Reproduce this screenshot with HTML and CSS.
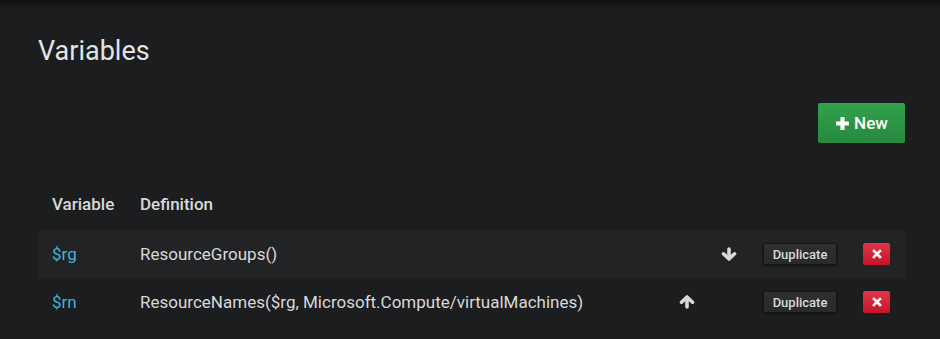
FILE: index.html
```html
<!DOCTYPE html>
<html>
<head>
<meta charset="utf-8">
<link rel="stylesheet" href="styles.css">
</head>
<body>
<div class="page">
  <h1 class="title">Variables</h1>
  <div class="toolbar">
    <button class="btn-new"><svg class="plus" viewBox="0 0 13 13" width="13" height="13"><rect x="4.4" y="0" width="4.2" height="13" rx="0.7"/><rect x="0" y="4.4" width="13" height="4.2" rx="0.7"/></svg><span>New</span></button>
  </div>
  <div class="table">
    <div class="row head">
      <div class="cell">Variable</div>
      <div class="cell">Definition</div>
      <div class="cell"></div><div class="cell"></div><div class="cell"></div><div class="cell"></div>
    </div>
    <div class="row odd">
      <div class="cell var">$rg</div>
      <div class="cell">ResourceGroups()</div>
      <div class="cell icon"></div>
      <div class="cell icon"><svg class="arrow" viewBox="0 0 16 14" width="16" height="14"><path d="M8 2 V10.5"/><path d="M2.5 6.8 L8 12 L13.5 6.8"/></svg></div>
      <div class="cell"><button class="btn-dup">Duplicate</button></div>
      <div class="cell"><button class="btn-del"><svg viewBox="0 0 10 10" width="10" height="10"><path d="M2 2 L8 8 M8 2 L2 8"/></svg></button></div>
    </div>
    <div class="row">
      <div class="cell var">$rn</div>
      <div class="cell">ResourceNames($rg, Microsoft.Compute/virtualMachines)</div>
      <div class="cell icon"><svg class="arrow up" viewBox="0 0 16 14" width="16" height="14"><path d="M8 2 V10.5"/><path d="M2.5 6.8 L8 12 L13.5 6.8"/></svg></div>
      <div class="cell icon"></div>
      <div class="cell"><button class="btn-dup">Duplicate</button></div>
      <div class="cell"><button class="btn-del"><svg viewBox="0 0 10 10" width="10" height="10"><path d="M2 2 L8 8 M8 2 L2 8"/></svg></button></div>
    </div>
  </div>
</div>
</body>
</html>
```

FILE: styles.css
```css
html, body {
  margin: 0;
  padding: 0;
}
body {
  width: 940px;
  height: 339px;
  overflow: hidden;
  background-color: #1c1d1f;
  background-image: linear-gradient(#111214 0px, #1c1d1f 10px);
  background-repeat: no-repeat;
  background-size: 100% 12px;
  font-family: Roboto, "Liberation Sans", sans-serif;
  color: #d8d9da;
}
.page {
  padding: 34px 35px 0 39px;
}
.title {
  margin: 0 0 0 -1px;
  font-size: 27px;
  line-height: 34px;
  font-weight: 400;
  color: #e3e4e6;
}
.toolbar {
  display: flex;
  justify-content: flex-end;
  margin-top: 35px;
}
.btn-new {
  display: flex;
  align-items: center;
  gap: 5px;
  height: 40px;
  width: 87px;
  justify-content: center;
  padding: 0 0 0 1px;
  border: none;
  border-radius: 2px;
  background: linear-gradient(#31a24d, #26893e);
  color: #fff;
  font-family: Roboto, "Liberation Sans", sans-serif;
  font-size: 17px;
  font-weight: 500;
}
.plus {
  fill: #fff;
}
.table {
  margin-top: 45px;
}
.row {
  display: grid;
  grid-template-columns: 88px 1fr 42px 42px 100px 55px;
  height: 48px;
  align-items: center;
  font-size: 17px;
}
.row.head {
  height: 32px;
  margin-bottom: 10px;
  font-weight: 500;
}
.row.odd {
  background: #222325;
}
.cell {
  padding-left: 13px;
  white-space: nowrap;
}
.cell.icon {
  padding-left: 0;
  display: flex;
  justify-content: center;
}
.var {
  color: #33b9de;
}
.arrow {
  display: block;
  fill: none;
  stroke: #d8d9da;
  stroke-width: 3.6;
  stroke-linecap: round;
  stroke-linejoin: round;
}
.arrow.up {
  transform: rotate(180deg);
}
.btn-dup {
  display: block;
  height: 22px;
  width: 74px;
  padding: 0;
  border: 1px solid #151516;
  border-radius: 2px;
  background: linear-gradient(#2f3032, #28292b);
  box-shadow: 0 1px 2px rgba(0,0,0,0.5);
  color: #d8d9da;
  font-family: Roboto, "Liberation Sans", sans-serif;
  font-size: 13px;
  font-weight: 500;
}
.btn-del {
  display: flex;
  align-items: center;
  justify-content: center;
  height: 22px;
  width: 27px;
  padding: 0;
  border: none;
  border-radius: 2px;
  background: linear-gradient(#e03549, #c4162a);
}
.btn-del svg {
  fill: none;
  stroke: #fff;
  stroke-width: 2.6;
  stroke-linecap: square;
}
```
